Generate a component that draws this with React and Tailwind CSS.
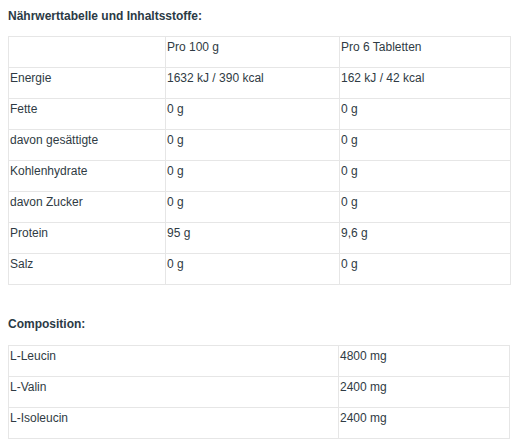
import React from "react";

const nutrition = [
  ["", "Pro 100 g", "Pro 6 Tabletten"],
  ["Energie", "1632 kJ / 390 kcal", "162 kJ / 42 kcal"],
  ["Fette", "0 g", "0 g"],
  ["davon gesättigte", "0 g", "0 g"],
  ["Kohlenhydrate", "0 g", "0 g"],
  ["davon Zucker", "0 g", "0 g"],
  ["Protein", "95 g", "9,6 g"],
  ["Salz", "0 g", "0 g"],
];

const composition = [
  ["L-Leucin", "4800 mg"],
  ["L-Valin", "2400 mg"],
  ["L-Isoleucin", "2400 mg"],
];

export default function App() {
  return (
    <div
      className="w-[522px] h-[446px] bg-white overflow-hidden text-[12px] leading-[14px] text-[#2f3b44]"
      style={{ fontFamily: '"Liberation Sans", Arial, sans-serif' }}
    >
      <div className="pl-2">
        <h2 className="pt-[9px] font-bold text-[12px] leading-[14px] text-[#2b3a45]">
          Nährwerttabelle und Inhaltsstoffe:
        </h2>
        <div className="mt-[13px] w-[503px] border-l border-t border-[#e6e6e6]">
          {nutrition.map((row, i) => (
            <div key={i} className="grid grid-cols-[157px_174px_171px]">
              {row.map((c, j) => (
                <div
                  key={j}
                  className="h-[31px] border-r border-b border-[#e6e6e6] pt-[3px] pl-[1px]"
                >
                  {c}
                </div>
              ))}
            </div>
          ))}
        </div>
        <h2 className="mt-[32px] font-bold text-[12px] leading-[14px] text-[#2b3a45]">
          Composition:
        </h2>
        <div className="mt-[14px] w-[502px] border-l border-t border-[#e6e6e6]">
          {composition.map((row, i) => (
            <div key={i} className="grid grid-cols-[330px_171px]">
              {row.map((c, j) => (
                <div
                  key={j}
                  className="h-[31px] border-r border-b border-[#e6e6e6] pt-[3px] pl-[1px]"
                >
                  {c}
                </div>
              ))}
            </div>
          ))}
        </div>
      </div>
    </div>
  );
}
